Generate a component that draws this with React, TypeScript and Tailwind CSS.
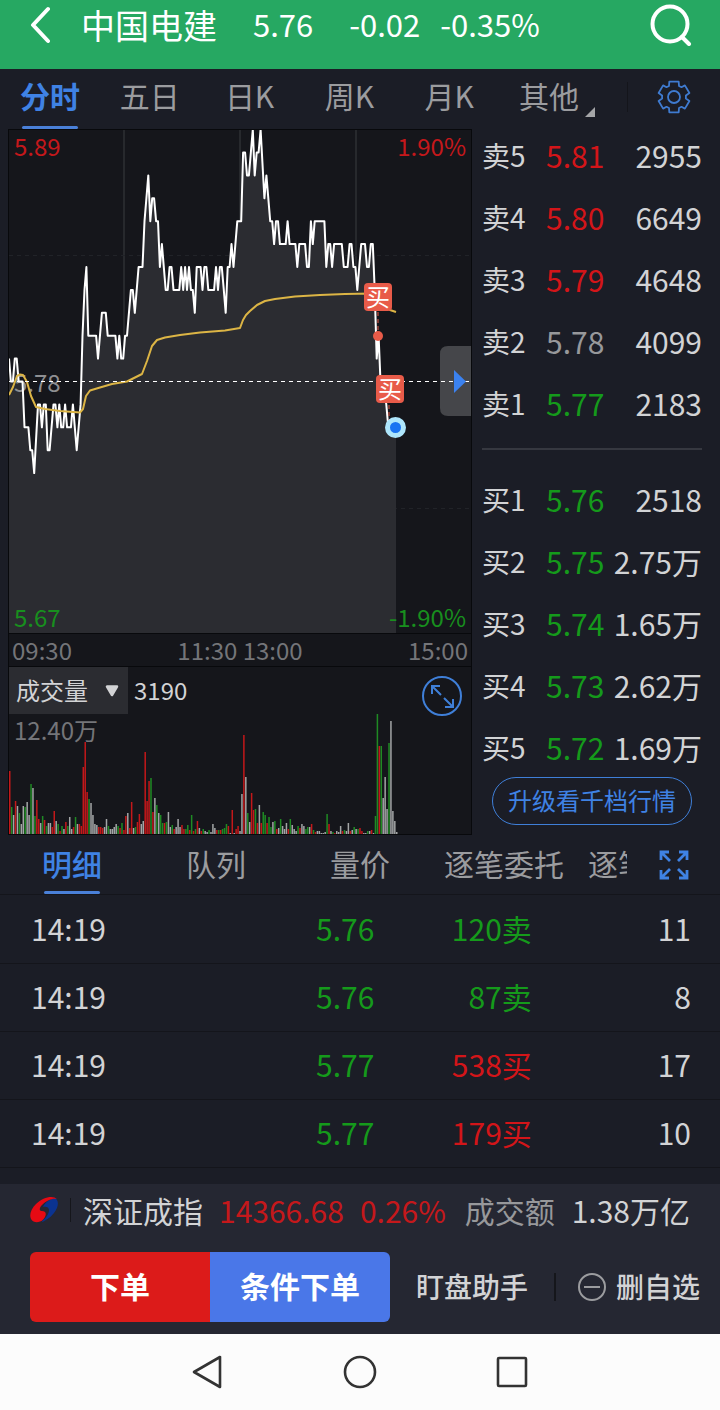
import { useState } from "react";
import clsx from "clsx";

const periodTabs = ["分时", "五日", "日K", "周K", "月K", "其他"];
const detailTabs = ["明细", "队列", "量价", "逐笔委托", "逐笔成交"];

const asks = [
    { label: "卖5", price: "5.81", qty: "2955", tone: "up" },
    { label: "卖4", price: "5.80", qty: "6649", tone: "up" },
    { label: "卖3", price: "5.79", qty: "4648", tone: "up" },
    { label: "卖2", price: "5.78", qty: "4099", tone: "flat" },
    { label: "卖1", price: "5.77", qty: "2183", tone: "down" },
];

const bids = [
    { label: "买1", price: "5.76", qty: "2518", tone: "down" },
    { label: "买2", price: "5.75", qty: "2.75万", tone: "down" },
    { label: "买3", price: "5.74", qty: "1.65万", tone: "down" },
    { label: "买4", price: "5.73", qty: "2.62万", tone: "down" },
    { label: "买5", price: "5.72", qty: "1.69万", tone: "down" },
];

const trades = [
    { time: "14:19", price: "5.76", volume: "120卖", side: "down", count: "11" },
    { time: "14:19", price: "5.76", volume: "87卖", side: "down", count: "8" },
    { time: "14:19", price: "5.77", volume: "538买", side: "up", count: "17" },
    { time: "14:19", price: "5.77", volume: "179买", side: "up", count: "10" },
];

const toneClass: Record<string, string> = {
    up: "text-[#d31519]",
    down: "text-[#159a1b]",
    flat: "text-[#97989b]",
};

const PREV_CLOSE = 578;
const MINUTE_W = 1.935;
const TICK_H = 22.9;
const MID_Y = 251.5;

// [minute, price in cents]
const ticks: [number, number][] = [
    [0, 579], [1, 578], [2, 578], [3, 579], [4, 579], [5, 578], [7, 578], [8, 576], [10, 576], [11, 575],
    [12, 575], [13, 574], [15, 577], [16, 577], [17, 576], [18, 577], [19, 577], [20, 575], [21, 575], [23, 577],
    [24, 577], [25, 576], [26, 577], [27, 576], [28, 576], [29, 577], [30, 576], [32, 576], [33, 577], [35, 575],
    [37, 577], [38, 580], [39, 582], [40, 583], [41, 580], [45, 580], [46, 579], [48, 581], [50, 581], [51, 580],
    [55, 580], [56, 579], [57, 580], [58, 579], [59, 579], [60, 580], [61, 580], [63, 582], [64, 582], [65, 581],
    [67, 583], [69, 583], [70, 585], [71, 586], [72, 587], [73, 585], [74, 586], [75, 586], [76, 585], [77, 585],
    [78, 583], [79, 584], [81, 582], [82, 582], [83, 583], [84, 583], [85, 582], [88, 582], [89, 583], [90, 582],
    [91, 583], [92, 582], [93, 583], [94, 582], [95, 582], [96, 581], [97, 583], [99, 583], [100, 582], [101, 583],
    [102, 583], [103, 582], [106, 582], [107, 583], [108, 582], [109, 583], [110, 583], [111, 582], [112, 581],
    [113, 583], [114, 583], [115, 584], [116, 583], [118, 585], [120, 585], [121, 588], [122, 588], [123, 587],
    [124, 587], [126, 589], [127, 587], [128, 588], [129, 588], [130, 589], [132, 586], [133, 587], [135, 585],
    [136, 585], [137, 584], [138, 585], [139, 585], [140, 584], [143, 584], [144, 585], [145, 584], [148, 584],
    [149, 583], [150, 584], [153, 584], [154, 583], [155, 583], [156, 585], [157, 584], [158, 585], [163, 585],
    [164, 583], [165, 584], [166, 584], [167, 583], [168, 584], [172, 584], [173, 583], [175, 583], [176, 584],
    [177, 584], [178, 583], [179, 583], [180, 582], [182, 584], [184, 584], [185, 583], [186, 583], [187, 584],
    [188, 584], [189, 582], [190, 579], [191, 580], [192, 578], [193, 578], [195, 577], [196, 576], [200, 576],
];

const pricePoints = ticks
    .map(([m, p]) => `${(m * MINUTE_W).toFixed(1)},${(MID_Y - (p - PREV_CLOSE) * TICK_H).toFixed(1)}`)
    .join(" ");

// one entry per minute: colour (r up, g down, w flat) and bar height
const volumes =
    "r63 g27 w19 r33 w28 g21 w10 w28 g27 w32 w19 g50 w46 g18 r34 r15 w11 g18 r14 g8 w11 w11 r7 r23 w13 g10 r3 g8 w5 r12 " +
    "g8 w17 w5 r7 g17 w10 r10 r8 r67 r92 r42 g35 w31 w19 w10 w9 r7 r7 r6 w7 w15 g8 w5 w5 w7 w10 g8 r6 g11 r4 " +
    "r18 w21 r6 r32 w6 g7 r12 r20 w10 w13 r82 r33 r53 g56 r22 w36 g29 w21 g19 g11 r11 g12 w22 w7 g9 r5 w7 w15 w7 r9 " +
    "r5 g5 g9 r4 g19 r3 g5 r13 w6 r3 g5 w3 w2 g4 w2 w10 w6 r4 g4 r4 g5 g6 g10 r8 w1 r24 w1 r5 r8 w3 " +
    "w40 r99 w57 g21 w12 r41 r24 g25 r11 w29 r11 g22 g19 r11 g17 g7 w12 g13 r5 w6 g15 w8 w5 w11 r5 g15 w9 w5 w3 g8 " +
    "r6 w10 w8 g5 g7 w7 r10 g4 r2 w3 w3 w1 w1 w2 g20 r10 w3 g2 r1 w3 w2 w8 r3 g4 w3 w11 r3 w4 g7 w5 " +
    "g5 r6 r3 w1 w1 g3 w3 r4 w1 g18 g120 r88 g88 w36 w57 w25 g91 w113 w23 w13 w2";

const barFill: Record<string, string> = { r: "#c3181a", g: "#1f8a24", w: "#a3a5a6" };

const averageLine =
    "M0,265 L4,257 L8,246 L11,244.5 L14,245 L18,252 L22,266 L27,277 L36,279 L51,281 L71,282.5 L74,279 L77,266 L81,260.5 " +
    "L91,257.5 L103,254 L118,251.5 L133,244 L138,231 L143,216 L148,210 L156,207.5 L171,205 L191,202.5 L216,200.5 L231,198 " +
    "L234,190 L237,185 L241,181 L248,175 L256,171 L266,169 L286,166.5 L311,165 L336,164 L362,163.5 L376,174 L381,180 L387,182";

type BookEntry = (typeof asks)[number];

function BookRow({ entry }: { entry: BookEntry }) {
    return (
        <div className="flex leading-[38px] text-[30px]">
            <span className="w-16 text-[28px]">{entry.label}</span>
            <span className={toneClass[entry.tone]}>{entry.price}</span>
            <span className="ml-auto">{entry.qty}</span>
        </div>
    );
}

function BuyMarker({ x, y }: { x: number; y: number }) {
    return (
        <g>
            <rect x={x} y={y} width="28" height="28" rx="4" fill="#e85b49" />
            <text x={x + 14} y={y + 23} textAnchor="middle" fontSize="24" fill="#fff">买</text>
        </g>
    );
}

function PriceChart() {
    return (
        <svg viewBox="0 0 462 503" className="block w-full h-auto">
            <g stroke="#27292d" strokeWidth="2">
                <path d="M115,0V503 M231,0V503 M347,0V503" />
            </g>
            <path d="M0,125.5H462 M0,378.5H462" stroke="#212328" strokeDasharray="4 4" />
            <polygon points={`0,503 ${pricePoints} 387,503`} fill="#2b2c31" />
            <text x="5" y="262" fontSize="24" fill="#8e8f92">5.78</text>
            <polyline points={pricePoints} fill="none" stroke="#fff" strokeWidth="2" strokeLinejoin="round" />
            <path d={averageLine} fill="none" stroke="#dcb545" strokeWidth="2" strokeLinejoin="round" />
            <path d="M431,224 q0,-8 8,-8 H462 V286 H439 q-8,0 -8,-8 Z" fill="#45464a" />
            <path d="M0,251.5H460" stroke="#fff" strokeDasharray="4 4" />
            <path d="M445,240 L457,251.5 L445,263 Z" fill="#3b82f0" />
            <path d="M369,182V202 M380,275V292" stroke="#e85b49" strokeDasharray="4 3" />
            <BuyMarker x={355} y={153} />
            <BuyMarker x={367} y={245} />
            <circle cx="369" cy="206" r="5" fill="#e85b49" />
            <circle cx="386.5" cy="297.5" r="8" fill="#1a73f2" stroke="#aee6fc" strokeWidth="5" />
        </svg>
    );
}

function VolumeChart() {
    return (
        <svg viewBox="0 0 462 120" className="block w-full h-auto">
            {volumes.split(" ").map((v, i) => {
                const h = Number(v.slice(1));
                return <rect key={i} x={i * MINUTE_W} y={120 - h} width="1.5" height={h} fill={barFill[v[0]]} />;
            })}
        </svg>
    );
}

function GearIcon() {
    return (
        <svg width="34" height="34" viewBox="-17 -17 34 34" fill="none" stroke="#3f7bd0" strokeWidth="1.8" strokeLinejoin="round">
            <path d="M-5,-11 L-4.7,-15.3 H4.7 L5,-11 L7.5,-9.8 L10.9,-11.6 L15.4,-4 L11.9,-1.5 V1.5 L15.4,4 L10.9,11.6 L7.5,9.8 L5,11 L4.7,15.3 H-4.7 L-5,11 L-7.5,9.8 L-10.9,11.6 L-15.4,4 L-11.9,1.5 V-1.5 L-15.4,-4 L-10.9,-11.6 L-7.5,-9.8 Z" />
            <circle r="6" />
        </svg>
    );
}

export default function App() {
    const [period, setPeriod] = useState("分时");
    const [detail, setDetail] = useState("明细");

    return (
        <div className="bg-[#1b1d26] text-[#d2d3d5] font-['Noto_Sans_CJK_SC',sans-serif]">
            {/* Header */}
            <header className="flex items-center h-[69px] pb-5 pl-[30px] pr-7 bg-[#26a862] text-white text-[31px]">
                <button aria-label="返回" className="mr-[31px]">
                    <svg width="20" height="38" viewBox="0 0 20 38" fill="none" stroke="currentColor" strokeWidth="4" strokeLinecap="round" strokeLinejoin="round">
                        <path d="M18,3 L3,19 L18,35" />
                    </svg>
                </button>
                <h1 className="text-[34px]">中国电建</h1>
                <span className="ml-9">5.76</span>
                <span className="ml-9">-0.02</span>
                <span className="ml-5">-0.35%</span>
                <button aria-label="搜索" className="ml-auto">
                    <svg width="42" height="42" viewBox="0 0 42 42" fill="none" stroke="currentColor" strokeWidth="4" strokeLinecap="round">
                        <circle cx="20" cy="20" r="17.5" />
                        <path d="M32,33 L39,40" />
                    </svg>
                </button>
            </header>

            {/* Period tabs */}
            <nav className="flex h-[60px]">
                <div className="grid flex-1 grid-cols-6 pr-7">
                    {periodTabs.map((tab) => (
                        <button
                            key={tab}
                            onClick={() => setPeriod(tab)}
                            className={clsx(
                                "relative flex justify-center text-[30px] leading-[52px]",
                                period === tab ? "text-[#3f82e4] font-bold" : "text-[#9b9c9f]"
                            )}
                        >
                            {tab}
                            {period === tab && <span className="absolute bottom-0 h-[3px] w-14 rounded-full bg-[#4a80d8]" />}
                            {tab === "其他" && (
                                <svg width="10" height="10" viewBox="0 0 10 10" className="absolute right-1 bottom-3">
                                    <path d="M10,0V10H0Z" fill="#a5a6a8" />
                                </svg>
                            )}
                        </button>
                    ))}
                </div>
                <div className="flex w-[93px] items-center justify-center pb-1">
                    <span className="h-[30px] w-px bg-[#14151b]" />
                    <button aria-label="设置" className="mx-auto">
                        <GearIcon />
                    </button>
                </div>
            </nav>

            {/* Chart and order book */}
            <div className="flex pl-2">
                <section className="flex-1 min-w-0 border border-[#08090c] bg-[#15161b] text-2xl leading-8 text-[#747579]">
                    <div className="relative border-b border-[#08090c]">
                        <PriceChart />
                        <span className="absolute left-[5px] top-0 text-[#c5181b]">5.89</span>
                        <span className="absolute right-[5px] top-0 text-[#c5181b]">1.90%</span>
                        <span className="absolute left-[5px] bottom-0 text-[#188f1e]">5.67</span>
                        <span className="absolute right-[5px] bottom-0 text-[#188f1e]">-1.90%</span>
                    </div>
                    <div className="flex h-[33px] border-b border-[#08090c] px-[3px]">
                        <span>09:30</span>
                        <span className="mx-auto">11:30 13:00</span>
                        <span>15:00</span>
                    </div>
                    <div className="relative flex h-[47px] items-center text-[#d2d3d5]">
                        <select aria-label="指标" className="h-full w-[119px] appearance-none bg-[#2b2c31] pl-[7px] pb-px">
                            <option>成交量</option>
                        </select>
                        <svg width="14" height="12" viewBox="0 0 14 12" className="pointer-events-none absolute left-24">
                            <path d="M2,1.5 H12 L7,10 Z" fill="#d2d3d5" stroke="#d2d3d5" strokeWidth="2.5" strokeLinejoin="round" />
                        </svg>
                        <span className="pl-[6px] pb-px">3190</span>
                        <button aria-label="放大" className="absolute right-2 top-2">
                            <svg width="42" height="42" viewBox="0 0 42 42" fill="none" stroke="#3f7fd8" strokeWidth="2">
                                <circle cx="21" cy="21" r="19" />
                                <path d="M11,19 V11 H19 M11,11 L20,20 M23,23 L32,32 M24,32 H32 V24" />
                            </svg>
                        </button>
                    </div>
                    <div className="relative">
                        <VolumeChart />
                        <span className="absolute left-[5px] top-0">12.40万</span>
                    </div>
                </section>

                <aside className="w-[248px] pl-[10px] pr-[18px] pt-[7px]">
                    <div className="flex flex-col gap-6">
                        {asks.map((entry) => (
                            <BookRow key={entry.label} entry={entry} />
                        ))}
                    </div>
                    <div className="mt-[26px] mb-[30px] h-[2px] bg-[#363840]" />
                    <div className="flex flex-col gap-6">
                        {bids.map((entry) => (
                            <BookRow key={entry.label} entry={entry} />
                        ))}
                    </div>
                    <button className="mx-auto mt-[11px] block h-12 w-[200px] rounded-full border border-[#3f7fd8] pb-[3px] text-2xl text-[#3f82e4]">
                        升级看千档行情
                    </button>
                </aside>
            </div>

            {/* Trade details */}
            <nav className="flex h-[60px] border-b border-[#14151b]">
                <div className="flex flex-1 overflow-hidden">
                    {detailTabs.map((tab) => (
                        <button
                            key={tab}
                            onClick={() => setDetail(tab)}
                            className={clsx(
                                "relative flex w-36 shrink-0 justify-center text-[30px] leading-[56px]",
                                detail === tab ? "text-[#3f82e4] font-medium" : "text-[#9b9c9f]"
                            )}
                        >
                            {tab}
                            {detail === tab && <span className="absolute bottom-0 h-[3px] w-14 rounded-full bg-[#4a80d8]" />}
                        </button>
                    ))}
                </div>
                <button aria-label="全屏" className="flex w-[93px] items-center justify-center">
                    <svg width="30" height="30" viewBox="0 0 30 30" fill="none" stroke="#3f82e4" strokeWidth="2.8">
                        <path d="M2,10 V2 H10 M2,2 L11,11 M20,2 H28 V10 M28,2 L19,11 M2,20 V28 H10 M2,28 L11,19 M20,28 H28 V20 M28,28 L19,19" />
                    </svg>
                </button>
            </nav>
            <table className="w-full table-fixed text-[30px] leading-10">
                <tbody>
                    {trades.map((trade, i) => (
                        <tr key={i} className="h-[68px] border-b border-[#14151b]">
                            <td className="w-[30%] pb-[2px] pl-[31px]">{trade.time}</td>
                            <td className={clsx("w-[22%] pb-[2px] text-right", toneClass.down)}>{trade.price}</td>
                            <td className={clsx("w-[22%] pb-[2px] pr-px text-right", toneClass[trade.side])}>{trade.volume}</td>
                            <td className="pb-[2px] pr-[29px] text-right">{trade.count}</td>
                        </tr>
                    ))}
                </tbody>
            </table>

            {/* Index bar and actions */}
            <footer className="mt-4 bg-[#252732] px-[30px] pt-[6px] pb-3">
                <div className="flex items-center text-[30px] leading-10">
                    <svg width="28" height="27" viewBox="0 0 28 27">
                        <path d="M25,2 C29,4 29,11 24,17 C20,22 15,25 11,26 C16,22 19,18 19,14 C19,11 16,10 13,11 C15,6 20,3 25,2 Z" fill="#0b3390" />
                        <path d="M27,3 C23,-1 13,1 6,8 C1,13 -1,19 1,23 C4,28 12,27 15,21 C17,17 15,15 12,15 C9,15 9,12 12,9 C16,5 22,2 27,3 Z" fill="#e60a14" />
                    </svg>
                    <span className="ml-3 mr-3 h-6 w-px bg-[#15161b]" />
                    <span>深证成指</span>
                    <span className="ml-4 text-[#c5181b]">14366.68</span>
                    <span className="ml-4 text-[#c5181b]">0.26%</span>
                    <span className="ml-auto text-[#97989b]">成交额</span>
                    <span className="ml-[17px]">1.38万亿</span>
                </div>
                <div className="mt-[22px] -mr-5 flex h-[70px] items-center text-[28px]">
                    <div className="flex h-full w-[360px] overflow-hidden rounded-md text-[30px] font-bold text-white">
                        <button className="flex-1 bg-[#dc1b1a] pb-[3px]">下单</button>
                        <button className="flex-1 bg-[#4a77e8] pb-[3px]">条件下单</button>
                    </div>
                    <button className="ml-[26px] pb-[2px] font-medium">盯盘助手</button>
                    <span className="ml-[26px] mr-[21px] h-7 w-[2px] bg-[#15161b]" />
                    <button className="flex items-center font-medium">
                        <svg width="30" height="30" viewBox="0 0 30 30" fill="none" stroke="#9b9c9f" strokeWidth="2" className="mr-[9px]">
                            <circle cx="15" cy="15" r="13" />
                            <path d="M7,15H23" />
                        </svg>
                        <span className="pb-[2px]">删自选</span>
                    </button>
                </div>
            </footer>

            {/* System navigation */}
            <nav className="flex h-[76px] items-center justify-center gap-[117px] bg-[#fcfcfc]">
                <button aria-label="后退">
                    <svg width="34" height="36" viewBox="0 0 34 36" fill="none" stroke="#333" strokeWidth="2.6" strokeLinejoin="round">
                        <path d="M29,3 V33 L3,18 Z" />
                    </svg>
                </button>
                <button aria-label="主页">
                    <svg width="36" height="36" viewBox="0 0 36 36" fill="none" stroke="#333" strokeWidth="2.6">
                        <circle cx="18" cy="18" r="15" />
                    </svg>
                </button>
                <button aria-label="最近任务">
                    <svg width="34" height="36" viewBox="0 0 34 36" fill="none" stroke="#333" strokeWidth="2.6">
                        <rect x="3" y="4" width="28" height="28" rx="1" />
                    </svg>
                </button>
            </nav>
        </div>
    );
}
